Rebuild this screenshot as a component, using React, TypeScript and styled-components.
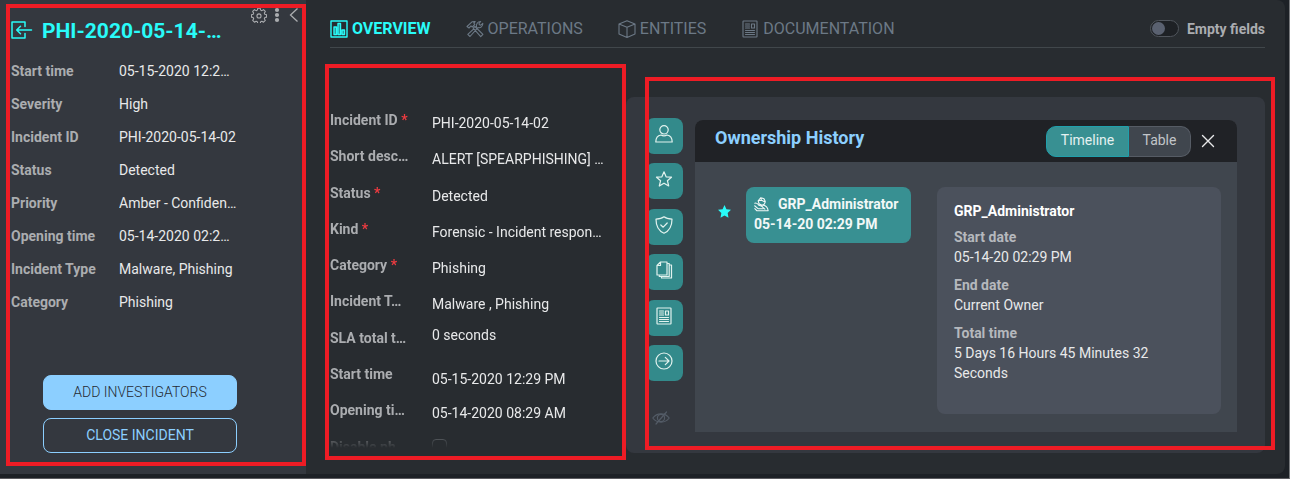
import React from "react";
import styled, { createGlobalStyle, css } from "styled-components";

const c = {
  page: "#1d2126",
  main: "#282c30",
  panel: "#34383f",
  card: "#40464e",
  detail: "#4b515c",
  teal: "#338a8b",
  cyan: "#29fbf9",
  blue: "#8ccfff",
  label: "#abadb0",
  value: "#e8e9ea",
  muted: "#6c7986",
  line: "#41474b",
  red: "#ee1c25",
};

const Global = createGlobalStyle`
  * { box-sizing: border-box; }
  html, body, #root { height: 100%; }
  body { margin: 0; background: #fff; font-family: Roboto, "Liberation Sans", sans-serif; font-size: 14px; line-height: 20px; color: ${c.value}; }
  button { font: inherit; color: inherit; background: none; border: 0; padding: 0; margin: 0; cursor: pointer; }
  h1, h2, h3, p, dl, dd, ul { margin: 0; padding: 0; }
  a { color: inherit; text-decoration: none; }
`;

const Page = styled.div`
  height: 100%;
  padding: 0 2px 3px 0;
  background: #fff;
`;
const Shell = styled.div`
  display: flex;
  height: 100%;
  padding: 0 4px 4px 0;
  background: ${c.page};
  border-right: 1px solid #77797c;
  border-bottom: 1px solid #5c5c60;
`;

const clip = css`
  overflow: hidden;
  text-overflow: ellipsis;
  white-space: nowrap;
`;

const Highlight = styled.div<{ $inset: string }>`
  position: absolute;
  inset: ${(p) => p.$inset};
  border: 4px solid ${c.red};
  pointer-events: none;
`;

const Sidebar = styled.aside`
  position: relative;
  display: flex;
  flex-direction: column;
  flex: 0 0 306px;
  padding: 7px 5px 21px 11px;
  background: ${c.panel};
`;
const SideTop = styled.header`
  display: flex;
  justify-content: space-between;
  align-items: flex-start;
  height: 47px;
`;
const Title = styled.h1`
  display: flex;
  align-items: center;
  gap: 9px;
  padding-top: 10px;
  font-size: 21px;
  line-height: 28px;
  font-weight: 700;
  color: ${c.cyan};
`;
const SideTools = styled.div`
  display: flex;
  align-items: center;
  gap: 4px;
  color: ${c.label};
  button { display: flex; }
`;
const Facts = styled.dl`
  flex: 1;
`;
const Fact = styled.div`
  display: grid;
  grid-template-columns: 108px 122px;
  align-items: center;
  height: 33px;
`;
const Label = styled.dt`
  ${clip}
  font-weight: 700;
  color: ${c.label};
`;
const Value = styled.dd<{ $shift?: number }>`
  ${clip}
  padding-top: ${(p) => p.$shift ?? 0}px;
`;
const Actions = styled.div`
  display: flex;
  flex-direction: column;
  gap: 8px;
  width: 194px;
  margin-left: 32px;
`;
const Action = styled.button<{ $filled?: boolean }>`
  height: 35px;
  padding-bottom: 2px;
  border: 1px solid ${c.blue};
  border-radius: 8px;
  font-weight: ${(p) => (p.$filled ? 300 : 400)};
  background: ${(p) => (p.$filled ? c.blue : "transparent")};
  color: ${(p) => (p.$filled ? "#252b33" : c.blue)};
`;

const Main = styled.main`
  display: flex;
  flex-direction: column;
  flex: 1;
  min-width: 0;
  padding: 0 20px 0 24px;
  background: ${c.main};
  border-radius: 0 8px 8px 0;
`;
const TabBar = styled.header`
  display: flex;
  justify-content: space-between;
  align-items: center;
  height: 48px;
  padding-top: 10px;
  border-bottom: 1px solid ${c.line};
`;
const Tabs = styled.nav`
  display: flex;
  gap: 35px;
`;
const Tab = styled.a<{ $active?: boolean }>`
  display: flex;
  align-items: center;
  gap: 4px;
  font-size: 16px;
  font-weight: ${(p) => (p.$active ? 700 : 400)};
  color: ${(p) => (p.$active ? c.cyan : c.muted)};
`;
const Switch = styled.label`
  display: flex;
  align-items: center;
  gap: 8px;
  font-weight: 700;
  color: ${c.label};
`;
const SwitchInput = styled.input`
  appearance: none;
  display: flex;
  align-items: center;
  width: 29px;
  height: 17px;
  margin: 0;
  padding: 0 1px;
  border: 1px solid #50555c;
  border-radius: 9px;
  background: #1e2125;
  &::before {
    content: "";
    width: 13px;
    height: 13px;
    border-radius: 50%;
    background: #5a6170;
  }
`;
const Content = styled.div`
  display: flex;
  flex: 1;
  min-height: 0;
`;
const Fields = styled.section`
  position: relative;
  flex: 0 0 296px;
  padding-top: 54px;
`;
const FieldClip = styled.div`
  height: 346px;
  overflow: hidden;
  mask-image: linear-gradient(#000 326px, transparent 346px);
`;
const FieldList = styled.dl`
  display: grid;
  grid-template-rows: repeat(10, 1fr);
  height: 363px;
`;
const Field = styled.div`
  display: grid;
  grid-template-columns: 82px 176px;
  column-gap: 20px;
  align-content: start;
  align-items: start;
  padding-top: 5px;
`;
const FieldLabel = styled(Label)`
  padding-top: 3px;
  span { color: #ee3b40; }
`;
const Check = styled.input`
  appearance: none;
  width: 15px;
  height: 15px;
  margin: 5px 0 0;
  border: 1px solid #81868b;
  border-radius: 4px;
`;

const Widget = styled.section`
  position: relative;
  display: flex;
  flex: 1;
  min-width: 0;
  gap: 12px;
  margin: 49px 0 21px;
  padding: 21px 28px 21px 20px;
  background: ${c.panel};
  border-radius: 8px;
`;
const Rail = styled.nav`
  display: flex;
  flex-direction: column;
  justify-content: space-between;
  width: 37px;
`;
const RailGroup = styled.div`
  display: flex;
  flex-direction: column;
  justify-content: space-between;
  height: 263px;
`;
const RailButton = styled.button`
  display: grid;
  place-items: center;
  height: 36px;
  padding: 0 2px 4px 0;
  border-radius: 8px;
  background: ${c.teal};
  color: #e2f2ee;
`;
const HideButton = styled.button`
  display: flex;
  padding: 0 6px 5px;
  color: #535b66;
`;
const Card = styled.article`
  display: flex;
  flex-direction: column;
  flex: 1;
  min-width: 0;
  margin-top: 2px;
  background: ${c.card};
  border-radius: 8px 8px 0 0;
`;
const CardHead = styled.header`
  display: flex;
  align-items: center;
  height: 42px;
  padding: 0 22px 0 20px;
  background: #202226;
  border-radius: 8px 8px 0 0;
`;
const CardTitle = styled.h2`
  flex: 1;
  padding-bottom: 6px;
  font-size: 18px;
  font-weight: 700;
  color: ${c.blue};
`;
const Segments = styled.div`
  display: flex;
  height: 31px;
  margin-right: 10px;
`;
const Segment = styled.button<{ $on?: boolean }>`
  width: ${(p) => (p.$on ? 83 : 62)}px;
  padding-bottom: 2px;
  border: 1px solid ${(p) => (p.$on ? "#20a0ac" : "#565c65")};
  border-left-width: ${(p) => (p.$on ? 1 : 0)}px;
  border-radius: ${(p) => (p.$on ? "10px 0 0 10px" : "0 10px 10px 0")};
  background: ${(p) => (p.$on ? "#389092" : c.card)};
  color: ${(p) => (p.$on ? "#e4f1f1" : "#c2c5c9")};
`;
const Close = styled.button`
  display: flex;
`;
const CardBody = styled.div`
  display: flex;
  flex: 1;
  padding: 25px 16px 18px 23px;
`;
const Timeline = styled.ul`
  flex: 1;
  list-style: none;
`;
const Entry = styled.li`
  display: flex;
  gap: 15px;
  align-items: center;
  > svg { margin-bottom: 8px; }
`;
const Owner = styled.div`
  width: 165px;
  height: 56px;
  padding: 7px 8px;
  border-radius: 8px;
  background: #389092;
  font-weight: 700;
  color: #f2f8f7;
  white-space: nowrap;
`;
const OwnerName = styled.div`
  display: flex;
  align-items: center;
  gap: 9px;
`;
const Detail = styled.section`
  width: 284px;
  padding: 14px 17px;
  border-radius: 8px;
  background: ${c.detail};
  h3 { font-size: 14px; line-height: 20px; font-weight: 700; color: #fff; }
`;
const DetailItem = styled.div`
  margin-top: 6px;
  & + & { margin-top: 8px; }
  dt { font-weight: 700; color: #b5b8bd; }
  dd { width: 220px; }
`;

type IconProps = { size?: number; children: React.ReactNode; sw?: number; box?: number };
const Icon = ({ size = 18, children, sw = 1.2, box = 18 }: IconProps) => (
  <svg width={size} height={size} viewBox={`0 0 ${box} ${box}`} fill="none" stroke="currentColor" strokeWidth={sw} strokeLinecap="round" strokeLinejoin="round" aria-hidden="true">
    {children}
  </svg>
);

const DocShape = () => (
  <>
    <rect x="2" y="1" width="14" height="16" rx=".5" />
    <path d="M4.5 4h4M4.5 6h4M4.5 8h4M4.5 10.5h9M4.5 12.5h9M4.5 14.5h9M10.5 4h3v4h-3z" />
  </>
);

const railIcons = [
  { name: "Ownership", art: <><circle cx="9" cy="4.800" r="4.200" /><path d="M.8 17c0-4.300 2.600-6.600 5.200-7 .9.600 1.900.9 3 .9s2.100-.3 3-.9c2.600.4 5.200 2.700 5.200 7z" /></> },
  { name: "Severity", art: <path d="m9 1.800 2.100 5 5.400.400-4.100 3.500 1.300 5.300L9 13.200 4.300 16l1.300-5.300-4.100-3.500 5.400-.400z" /> },
  { name: "Status", art: <><path d="M9 .8c2 1.700 4.800 2.300 8 2.400 0 6.800-2.300 11.500-8 14-5.700-2.500-8-7.200-8-14 3.200-.1 6-.7 8-2.400z" /><path d="m5.800 9 2.400 2.200 4-4.200" /></> },
  { name: "Files", art: <><path d="M5.500 1H12v13H2V4.500zM5.500 1v3.500H2" /><path d="M12.500 2.500h1.700v13H4.300V14.500M14.700 4h1.800v13H6.500v-1.500" /></> },
  { name: "Report", art: <DocShape /> },
  { name: "Transfers", art: <><circle cx="9" cy="9" r="8" /><path d="M4 9h10M10.300 5.300 14 9l-3.700 3.700" /></> },
];

const facts = [
  ["Start time", "05-15-2020 12:2…"],
  ["Severity", "High"],
  ["Incident ID", "PHI-2020-05-14-02"],
  ["Status", "Detected"],
  ["Priority", "Amber - Confiden…"],
  ["Opening time", "05-14-2020 02:2…"],
  ["Incident Type", "Malware, Phishing"],
  ["Category", "Phishing"],
];

const fields: { label: string; value: string; required?: boolean; shift?: number }[] = [
  { label: "Incident ID", value: "PHI-2020-05-14-02", required: true },
  { label: "Short desc…", value: "ALERT [SPEARPHISHING] …" },
  { label: "Status", value: "Detected", required: true },
  { label: "Kind", value: "Forensic - Incident respon…", required: true },
  { label: "Category", value: "Phishing", required: true },
  { label: "Incident T…", value: "Malware , Phishing" },
  { label: "SLA total t…", value: "0 seconds", shift: 0 },
  { label: "Start time", value: "05-15-2020 12:29 PM", shift: 8 },
  { label: "Opening ti…", value: "05-14-2020 08:29 AM" },
];

const tabs = [
  { name: "OVERVIEW", active: true, art: <><rect x="1" y="1" width="16" height="16" /><path d="M4 14.500V7h2.500v7.500zM8 14.500V3.500h2.500v11zM12 14.500V10h2.500v4.500z" fill="currentColor" fillOpacity=".45" /></> },
  { name: "OPERATIONS", art: <><path d="M1 6.500 6 1.800l3.200-.3L7.800 3l1 1.500-2.600 2.500-1.200-1.100L3 8zM7.200 8.200l1.700-1.700 8 7.900-2.200 2.200zM10.500 6.800c-.6-2.500 1-5.300 4.200-5.300L13 3.500l.4 1.300 1.400.4 2-1.800c.3 3-2.400 5-4.900 4.200L4 16.500 1.800 14.300l6-5.400" /></> },
  { name: "ENTITIES", art: <path d="M9 .8 17 4v10l-8 3.400L1 14V4zM1 4l8 3.300L17 4M9 7.300v10" /> },
  { name: "DOCUMENTATION", art: <DocShape /> },
];

export default function App() {
  return (
    <Page>
      <Global />
      <Shell>
        <Sidebar>
          <SideTop>
            <Title>
              <Icon size={22} box={22} sw={1.500}><path d="M14 6.500V2H1v16h13v-4.500M20.500 10H6M9.500 6.200 5.700 10l3.800 3.800" /></Icon>
              PHI-2020-05-14-…
            </Title>
            <SideTools>
              <button aria-label="Settings">
                <Icon size={16}><path d="M7.600 1.500h2.800l.5 2 1.300.6 1.900-1.100 2 2-1.100 1.900.5 1.200 2 .5v2.800l-2 .5-.5 1.300 1.100 1.900-2 2-1.900-1.100-1.300.5-.5 2H7.600l-.5-2-1.300-.5-1.900 1.100-2-2L3 13.200l-.5-1.300-2-.5V8.600l2-.5L3 6.900 1.900 5l2-2 1.900 1.100 1.300-.6z" /><circle cx="9" cy="10" r="2.300" /></Icon>
              </button>
              <button aria-label="More">
                <svg width="12" height="16" viewBox="0 0 12 16" fill="currentColor"><circle cx="6" cy="3" r="2.100" /><circle cx="6" cy="8" r="2.100" /><circle cx="6" cy="13" r="2.100" /></svg>
              </button>
              <button aria-label="Collapse">
                <svg width="14" height="16" viewBox="0 0 14 16" fill="none" stroke="currentColor" strokeWidth="1.300"><path d="M10.500 1.500 3.500 8l7 6.500" /></svg>
              </button>
            </SideTools>
          </SideTop>
          <Facts>
            {facts.map(([k, v]) => (
              <Fact key={k}><Label>{k}</Label><Value>{v}</Value></Fact>
            ))}
          </Facts>
          <Actions>
            <Action $filled>ADD INVESTIGATORS</Action>
            <Action>CLOSE INCIDENT</Action>
          </Actions>
          <Highlight $inset="4px 0 8px 6px" />
        </Sidebar>
        <Main>
          <TabBar>
            <Tabs>
              {tabs.map((t) => (
                <Tab key={t.name} href="#" $active={t.active}><Icon sw={t.active ? 1.400 : 1.100}>{t.art}</Icon>{t.name}</Tab>
              ))}
            </Tabs>
            <Switch><SwitchInput type="checkbox" role="switch" />Empty fields</Switch>
          </TabBar>
          <Content>
            <Fields>
              <FieldClip>
                <FieldList>
                  {fields.map((f) => (
                    <Field key={f.label}>
                      <FieldLabel>{f.label}{f.required && <span> *</span>}</FieldLabel>
                      <Value $shift={f.shift ?? 6}>{f.value}</Value>
                    </Field>
                  ))}
                  <Field>
                    <FieldLabel as="label" htmlFor="phases">Disable ph…</FieldLabel>
                    <Check id="phases" type="checkbox" />
                  </Field>
                </FieldList>
              </FieldClip>
              <Highlight $inset="16px 0 14px -5px" />
            </Fields>
            <Widget>
              <Rail>
                <RailGroup>
                  {railIcons.map((r) => (
                    <RailButton key={r.name} aria-label={r.name}><Icon>{r.art}</Icon></RailButton>
                  ))}
                </RailGroup>
                <HideButton aria-label="Hide panel">
                  <Icon><path d="M.8 9C5 3.500 13 3.500 17.200 9 13 14.500 5 14.500.8 9zM14.500 3 4 15" /><circle cx="9" cy="9" r="3.600" /></Icon>
                </HideButton>
              </Rail>
              <Card>
                <CardHead>
                  <CardTitle>Ownership History</CardTitle>
                  <Segments>
                    <Segment $on>Timeline</Segment>
                    <Segment>Table</Segment>
                  </Segments>
                  <Close aria-label="Close"><Icon size={14} box={14} sw={1.400}><path d="m1.500 1.500 11 11M12.500 1.500l-11 11" /></Icon></Close>
                </CardHead>
                <CardBody>
                  <Timeline>
                    <Entry>
                      <svg width="13" height="13" viewBox="0 0 14 14" fill={c.cyan}><path d="m7 0 2.100 4.600 4.900.6-3.600 3.400.9 5L7 11.200l-4.300 2.400.9-5L0 5.200l4.900-.6z" /></svg>
                      <Owner>
                        <OwnerName>
                          <Icon size={15} sw={1.300}><path d="M5 4.500 8 1l4 1 1.500 3.500-1 3-3 1.500L6 8zM5 4.500 9 4l4.500 2M8 1l1 3M1 7.500c2-1 3.500.5 5 2.500l4 1.500M.8 10.500l4 3.500h6M11 10c3.500.5 5.500 3 6 6.500H3.500L1 14M9 11l4 3.500" /></Icon>
                          GRP_Administrator
                        </OwnerName>
                        05-14-20 02:29 PM
                      </Owner>
                    </Entry>
                  </Timeline>
                  <Detail>
                    <h3>GRP_Administrator</h3>
                    <dl>
                      <DetailItem><dt>Start date</dt><dd>05-14-20 02:29 PM</dd></DetailItem>
                      <DetailItem><dt>End date</dt><dd>Current Owner</dd></DetailItem>
                      <DetailItem><dt>Total time</dt><dd>5 Days 16 Hours 45 Minutes 32 Seconds</dd></DetailItem>
                    </dl>
                  </Detail>
                </CardBody>
              </Card>
              <Highlight $inset="-20px -10px 3px 19px" />
            </Widget>
          </Content>
        </Main>
      </Shell>
    </Page>
  );
}
